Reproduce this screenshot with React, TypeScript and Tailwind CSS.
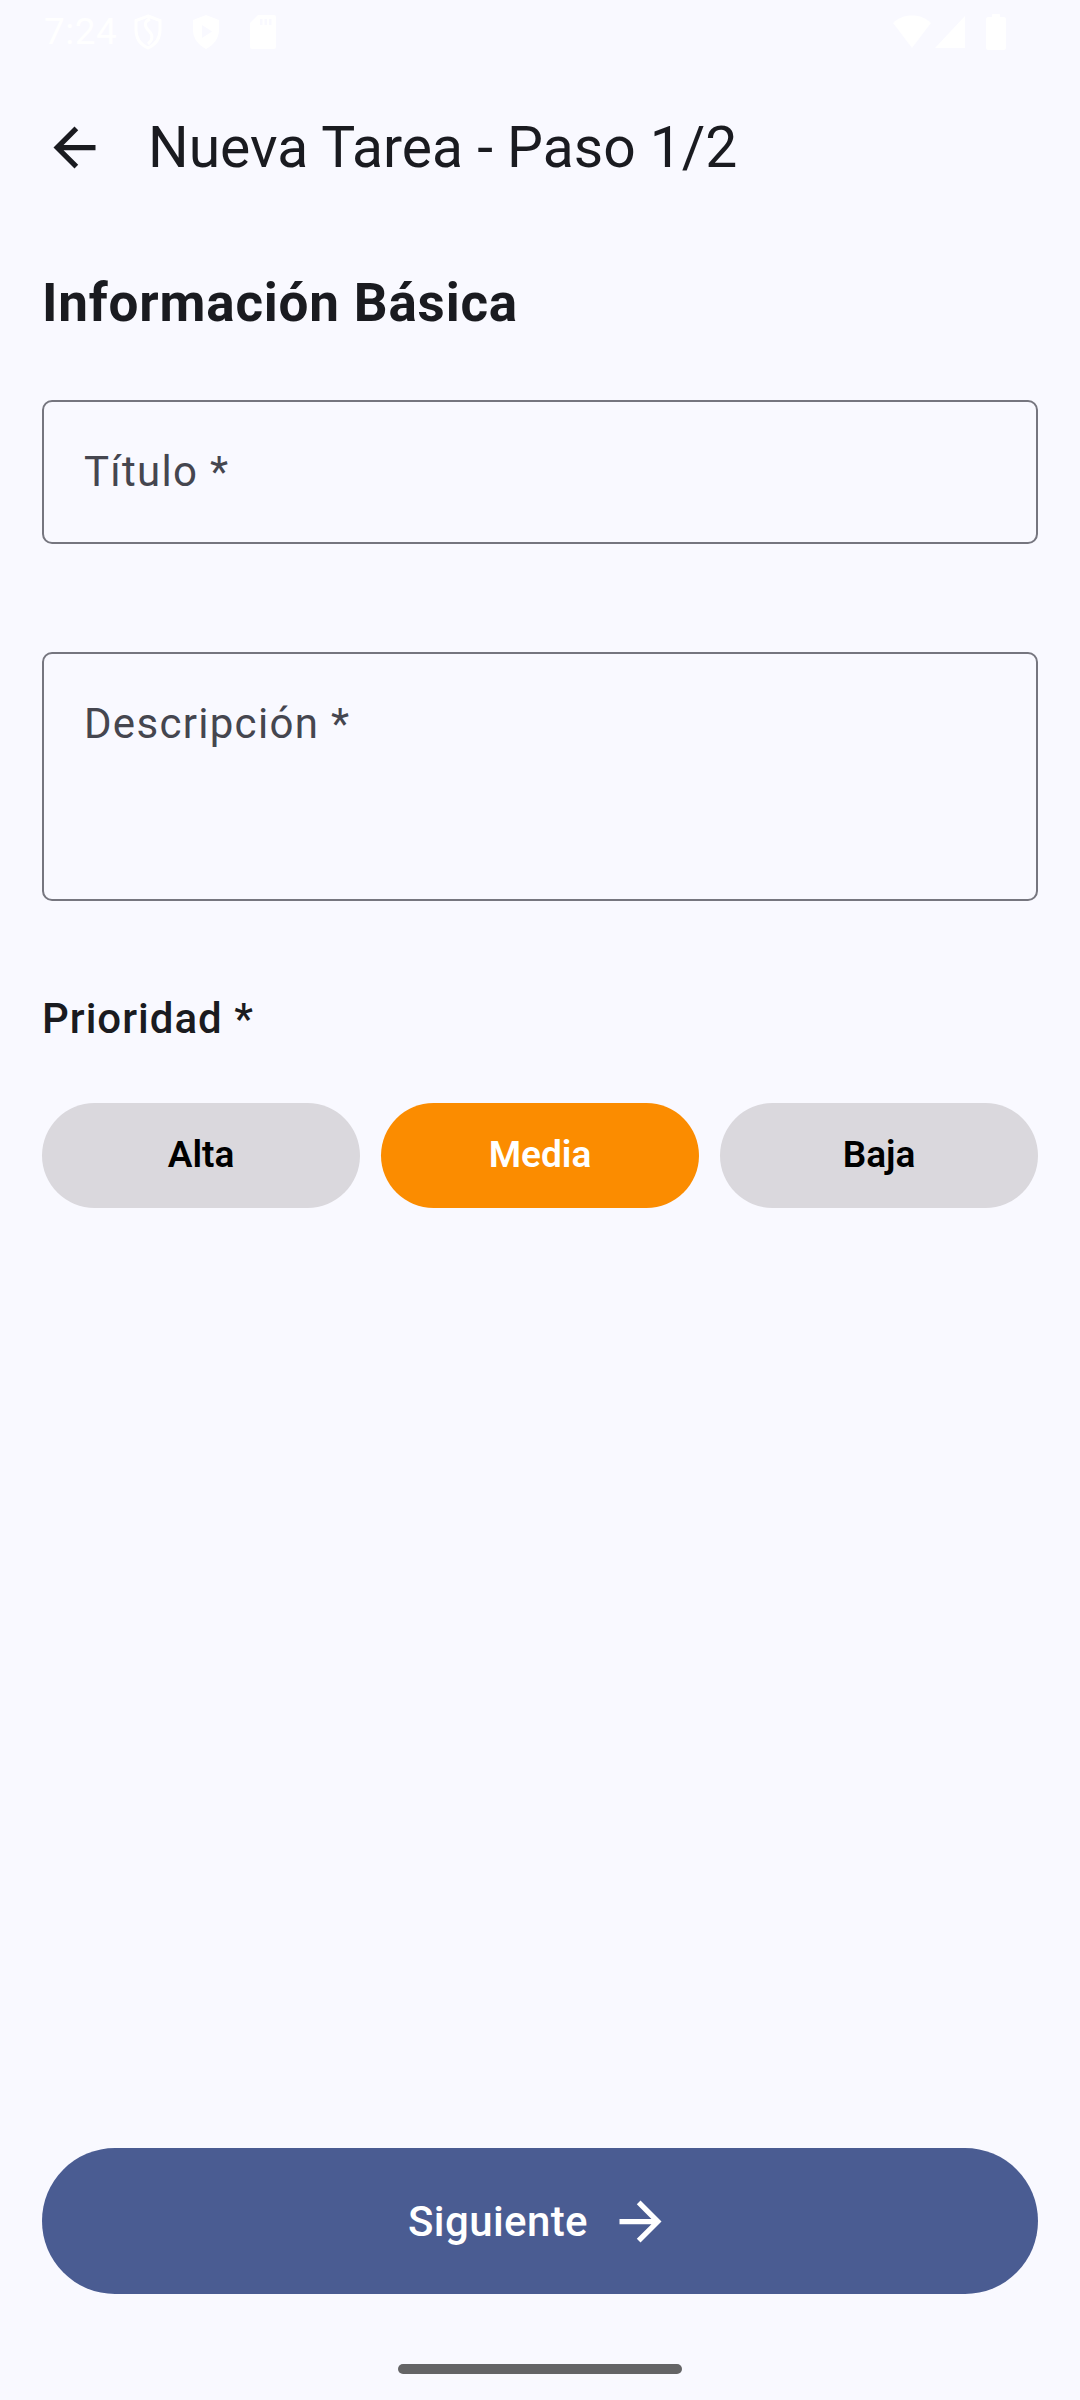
import React from "react";

function BackArrow() {
  return (
    <svg width="63" height="63" viewBox="0 0 24 24" fill="#1A1B20">
      <path d="M20 11H7.83l5.59-5.59L12 4l-8 8 8 8 1.41-1.41L7.83 13H20v-2z" />
    </svg>
  );
}

function ForwardArrow() {
  return (
    <svg width="63" height="63" viewBox="0 0 24 24" fill="#FFFFFF">
      <path d="M12 4l-1.41 1.41L16.17 11H4v2h12.17l-5.58 5.59L12 20l8-8z" />
    </svg>
  );
}

function StatusBar() {
  return (
    <div className="h-[63px] w-full flex items-center justify-between px-[44px] text-white">
      <div className="flex items-center">
        <span className="text-[37px] leading-none tracking-[0.5px]" style={{ fontFamily: "Roboto, sans-serif" }}>7:24</span>
        <svg className="ml-[16px]" width="30" height="36" viewBox="0 0 30 36" fill="none" stroke="#FFFFFF" strokeWidth="3">
          <path d="M15 2 L27 6.5 V16 C27 25 21.5 31 15 34 C8.5 31 3 25 3 16 V6.5 Z" />
          <path d="M17 5 C10 8 12 13 16 17 C20 21 20 26 15 30" />
        </svg>
        <svg className="ml-[28px]" width="30" height="36" viewBox="0 0 30 36" fill="#FFFFFF">
          <path d="M15 1 L28 6 V16 C28 25 22 31.5 15 35 C8 31.5 2 25 2 16 V6 Z" />
          <path d="M11 11 L21 17.5 L11 24 Z" fill="#F9F9FF" />
        </svg>
        <svg className="ml-[28px]" width="28" height="36" viewBox="0 0 28 36" fill="#FFFFFF">
          <path d="M9 1 H25 a2 2 0 0 1 2 2 V33 a2 2 0 0 1 -2 2 H3 a2 2 0 0 1 -2 -2 V9 Z" />
          <rect x="11" y="5" width="2.5" height="6" fill="#F9F9FF" />
          <rect x="15.5" y="5" width="2.5" height="6" fill="#F9F9FF" />
          <rect x="20" y="5" width="2.5" height="6" fill="#F9F9FF" />
        </svg>
      </div>
      <div className="flex items-center mr-[30px]">
        <svg width="40" height="36" viewBox="0 0 40 36" fill="#FFFFFF">
          <path d="M20 34 L1 9 C6 4 12.5 1.5 20 1.5 C27.5 1.5 34 4 39 9 Z" />
        </svg>
        <svg className="ml-[2px]" width="32" height="34" viewBox="0 0 32 34" fill="#FFFFFF">
          <path d="M31 1 V33 H1 Z" />
        </svg>
        <svg className="ml-[20px]" width="20" height="36" viewBox="0 0 20 36" fill="#FFFFFF">
          <rect x="6" y="0" width="8" height="4" rx="1" />
          <rect x="0" y="3" width="20" height="33" rx="2.5" />
        </svg>
      </div>
    </div>
  );
}

function Chip({ label, selected }: { label: string; selected?: boolean }) {
  return (
    <div
      className={
        "flex-1 h-[105px] rounded-full flex items-center justify-center text-[37px] font-semibold " +
        (selected ? "bg-[#FB8C00] text-white" : "bg-[#DAD8DD] text-black")
      }
    >
      {label}
    </div>
  );
}

export default function App() {
  return (
    <div
      className="w-[1080px] h-[2400px] bg-[#F9F9FF] flex flex-col text-[#1A1B20]"
      style={{ fontFamily: "Roboto, 'Noto Sans', sans-serif" }}
    >
      <StatusBar />
      <div className="h-[168px] flex items-center">
        <div className="ml-[43px] w-[63px] h-[63px] flex items-center justify-center">
          <BackArrow />
        </div>
        <div className="ml-[42px] text-[57px] leading-[73px] text-[#1A1B20]">Nueva Tarea - Paso 1/2</div>
      </div>
      <div className="flex-1 flex flex-col px-[42px]">
        <div className="mt-[36px] text-[53px] leading-[73.5px] font-bold tracking-[0.8px] text-[#1A1B20]">Información Básica</div>
        <div className="mt-[59px] h-[144px] border-2 border-[#76767F] rounded-[10px] flex items-center pl-[40px]">
          <span className="text-[42px] leading-[63px] tracking-[1.3px] text-[#45464F]">Título *</span>
        </div>
        <div className="mt-[108px] h-[249px] border-2 border-[#76767F] rounded-[10px] pl-[40px] pt-[38px]">
          <span className="block text-[42px] leading-[63px] tracking-[1.3px] text-[#45464F]">Descripción *</span>
        </div>
        <div className="mt-[86px] text-[42px] leading-[63px] font-medium tracking-[1px] text-[#1A1B20]">Prioridad *</div>
        <div className="mt-[53px] flex gap-[21px]">
          <Chip label="Alta" />
          <Chip label="Media" selected />
          <Chip label="Baja" />
        </div>
        <div className="flex-1" />
        <div className="h-[146px] rounded-full bg-[#4A5C92] flex items-center justify-center text-white">
          <span className="text-[42px] leading-[63px] font-medium tracking-[0.4px]">Siguiente</span>
          <div className="ml-[21px] w-[63px] h-[63px] flex items-center justify-center">
            <ForwardArrow />
          </div>
        </div>
        <div className="h-[70px]" />
        <div className="h-[10px] w-[284px] self-center rounded-full bg-[#646466]" />
        <div className="h-[26px]" />
      </div>
    </div>
  );
}
